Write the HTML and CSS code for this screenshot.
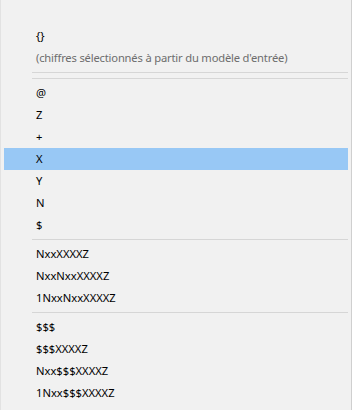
FILE: index.html
```html
<!DOCTYPE html>
<html lang="fr">
<head>
<meta charset="utf-8">
<link rel="stylesheet" href="styles.css">
</head>
<body>
<div class="menu">
  <div class="group head">
    <div class="item">{}</div>
    <div class="item note">(chiffres sélectionnés à partir du modèle d'entrée)</div>
  </div>
  <div class="sep"></div>
  <div class="group">
    <div class="item">@</div>
    <div class="item">Z</div>
    <div class="item">+</div>
    <div class="item selected">X</div>
    <div class="item">Y</div>
    <div class="item">N</div>
    <div class="item">$</div>
  </div>
  <div class="sep"></div>
  <div class="group">
    <div class="item">NxxXXXXZ</div>
    <div class="item">NxxNxxXXXXZ</div>
    <div class="item">1NxxNxxXXXXZ</div>
  </div>
  <div class="sep"></div>
  <div class="group">
    <div class="item">$$$</div>
    <div class="item">$$$XXXXZ</div>
    <div class="item">Nxx$$$XXXXZ</div>
    <div class="item">1Nxx$$$XXXXZ</div>
  </div>
</div>
</body>
</html>
```
FILE: styles.css
```css
html, body {
  margin: 0;
  padding: 0;
  background: #ffffff;
}
.menu {
  box-sizing: border-box;
  width: 352px;
  height: 410px;
  background: #f1f1f1;
  border-left: 1px solid #e2e2e2;
  border-right: 1px solid #cfcfcf;
  padding-top: 25px;
  font-family: "Segoe UI", "Noto Sans", sans-serif;
  font-size: 11.2px;
  color: #000000;
}
.item {
  height: 22px;
  line-height: 22px;
  margin: 0 3px 0 3px;
  padding-left: 32px;
  white-space: nowrap;
}
.head {
  border-bottom: 1px solid #d6d6d6;
  margin-left: 31px;
  margin-right: 3px;
  padding-bottom: 3px;
}
.head .item {
  margin: 0;
  padding-left: 4px;
}
.note {
  color: #6d6d6d;
  letter-spacing: -0.18px;
}
.selected {
  background: #98c8f5;
}
.sep {
  height: 1px;
  background: #d6d6d6;
  margin: 3px 3px 3px 31px;
}
.head + .sep {
  margin-top: 5px;
}
```
